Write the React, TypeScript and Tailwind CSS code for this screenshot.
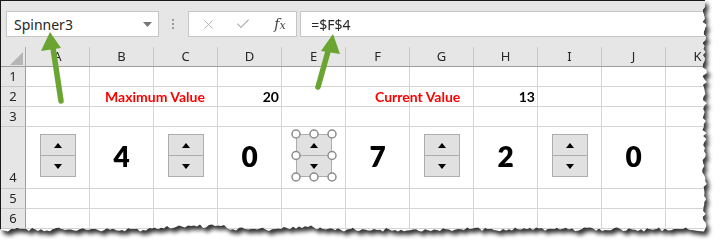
import { X, Check } from "lucide-react";

const cols = ["A", "B", "C", "D", "E", "F", "G", "H", "I", "J", "K"];

// jagged "torn paper" outline, deterministic
const tornPath = () => {
  let seed = 7;
  const rnd = () => {
    seed = (seed * 9301 + 49297) % 233280;
    return seed / 233280;
  };
  const pts: string[] = ["0px 0px", "705px 0px"];
  for (let y = 4; y < 228; y += 3) {
    pts.push(`${(702 + rnd() * 5).toFixed(1)}px ${y}px`);
  }
  for (let x = 704; x > 0; x -= 3) {
    const base = x > 160 && x < 230 ? 226 : x > 280 && x < 320 ? 227 : 229;
    pts.push(`${x}px ${(base + rnd() * 4 - 1.5).toFixed(1)}px`);
  }
  pts.push("0px 229px");
  return `polygon(${pts.join(",")})`;
};

const Tri = ({ up }: { up?: boolean }) => (
  <svg width="8" height="5" viewBox="0 0 8 5">
    <path d={up ? "M0 5 L4 0 L8 5 Z" : "M0 0 L8 0 L4 5 Z"} fill="#000" />
  </svg>
);

const Spinner = ({ selected }: { selected?: boolean }) => (
  <div className="relative">
    <div className="w-[36px] h-[43px] border border-[#adadad] bg-[#e1e1e1] flex flex-col">
      <div className="flex-1 flex items-center justify-center border-b border-[#adadad]">
        <Tri up />
      </div>
      <div className="flex-1 flex items-center justify-center">
        <Tri />
      </div>
    </div>
    {selected && (
      <svg
        className="absolute -left-[5px] -top-[5px]"
        width="46"
        height="53"
        viewBox="0 0 46 53"
      >
        {[
          [5, 5],
          [23, 5],
          [41, 5],
          [5, 26.5],
          [41, 26.5],
          [5, 48],
          [23, 48],
          [41, 48],
        ].map(([cx, cy], i) => (
          <circle
            key={i}
            cx={cx}
            cy={cy}
            r="4"
            fill="#fff"
            stroke="#8c8c8c"
            strokeWidth="1.5"
          />
        ))}
      </svg>
    )}
  </div>
);

const Big = ({ v }: { v: string }) => (
  <span className="font-['Lato'] font-extrabold text-[28px] text-black leading-none">
    {v}
  </span>
);

export default function App() {
  const row4: Record<string, JSX.Element> = {
    A: <Spinner />,
    B: <Big v="4" />,
    C: <Spinner />,
    D: <Big v="0" />,
    E: <Spinner selected />,
    F: <Big v="7" />,
    G: <Spinner />,
    H: <Big v="2" />,
    I: <Spinner />,
    J: <Big v="0" />,
  };

  const rows = [
    { n: "1", h: "h-[20px]" },
    { n: "2", h: "h-[20px]" },
    { n: "3", h: "h-[20px]" },
    { n: "4", h: "h-[62px]" },
    { n: "5", h: "h-[20px]" },
    { n: "6", h: "h-[20px]" },
  ];

  return (
    <div className="relative w-[726px] h-[250px] bg-white overflow-hidden font-['Open_Sans',sans-serif]">
      <div className="[filter:drop-shadow(3px_4px_2px_rgba(0,0,0,0.8))]">
        <div
          className="w-[716px] h-[240px] bg-white border-t border-l border-[#1a1a1a] overflow-hidden"
          style={{ clipPath: tornPath() }}
        >
          {/* formula bar */}
          <div className="h-[46px] bg-[#e6e6e6] flex items-start pt-[10px] pl-[5px]">
            <div className="w-[154px] h-[26px] bg-white border border-[#c6c6c6] flex items-center justify-between pl-[7px] pr-[6px]">
              <span className="text-[14px] text-[#262626] font-['Noto_Sans',sans-serif]">
                Spinner3
              </span>
              <svg width="9" height="5" viewBox="0 0 9 5">
                <path d="M0 0 L9 0 L4.5 5 Z" fill="#777" />
              </svg>
            </div>
            <div className="w-[30px] h-[26px] flex flex-col items-center justify-center gap-[2px]">
              <div className="w-[2px] h-[2px] bg-[#9a9a9a]" />
              <div className="w-[2px] h-[2px] bg-[#9a9a9a]" />
              <div className="w-[2px] h-[2px] bg-[#9a9a9a]" />
            </div>
            <div className="w-[110px] h-[26px] bg-white border border-[#c6c6c6] flex items-center pl-[12px]">
              <X size={15} strokeWidth={1.4} color="#adadad" />
              <Check size={16} strokeWidth={1.6} color="#adadad" className="ml-[19px]" />
              <span className="ml-[23px] font-['DejaVu_Serif',serif] italic text-[14px] text-[#444] leading-none">
                f<span className="text-[11px]">x</span>
              </span>
            </div>
            <div className="ml-[3px] w-[420px] h-[26px] bg-white border border-[#c6c6c6] flex items-center pl-[10px]">
              <span className="text-[14px] text-[#262626] font-['Noto_Sans',sans-serif]">
                =$F$4
              </span>
            </div>
          </div>

          {/* column headers */}
          <div className="flex h-[20px] bg-[#e6e6e6] border-b border-[#9e9e9e]">
            <div className="w-[25px] shrink-0 border-r border-[#ababab] flex items-end justify-end pr-[2px] pb-[1px]">
              <svg width="13" height="13" viewBox="0 0 13 13">
                <path d="M13 0 L13 13 L0 13 Z" fill="#b5b5b5" />
              </svg>
            </div>
            {cols.map((c) => (
              <div
                key={c}
                className="w-[64px] shrink-0 border-r border-[#c8c8c8] flex items-center justify-center text-[13px] text-[#262626] font-['Noto_Sans',sans-serif]"
              >
                {c}
              </div>
            ))}
          </div>

          {/* rows */}
          {rows.map((r) => (
            <div key={r.n} className={`flex ${r.h}`}>
              <div
                className={`w-[25px] shrink-0 bg-[#e6e6e6] border-r border-b border-r-[#9e9e9e] border-b-[#c8c8c8] flex justify-center text-[13px] text-[#262626] font-['Noto_Sans',sans-serif] ${
                  r.n === "4" ? "items-end pb-[1px]" : "items-center"
                }`}
              >
                {r.n}
              </div>
              {cols.map((c) => {
                let content: JSX.Element | null = null;
                let align = "items-center justify-center";
                if (r.n === "2") {
                  if (c === "B")
                    content = (
                      <span className="ml-[15px] whitespace-nowrap text-[14px] font-bold text-[#ff0000] font-['Lato',sans-serif]">
                        Maximum Value
                      </span>
                    );
                  if (c === "D")
                    content = (
                      <span className="text-[14px] font-bold font-['Lato',sans-serif]">20</span>
                    );
                  if (c === "F")
                    content = (
                      <span className="ml-[29px] whitespace-nowrap text-[14px] font-bold text-[#ff0000] font-['Lato',sans-serif]">
                        Current Value
                      </span>
                    );
                  if (c === "H")
                    content = (
                      <span className="text-[14px] font-bold font-['Lato',sans-serif]">13</span>
                    );
                  if (c === "B" || c === "F") align = "items-center justify-start";
                  if (c === "D" || c === "H") align = "items-center justify-end pr-[2px]";
                }
                if (r.n === "4" && row4[c]) {
                  content = row4[c];
                  align = "items-center justify-center pb-[4px]";
                }
                return (
                  <div
                    key={c}
                    className={`w-[64px] shrink-0 border-r border-b border-[#d4d4d4] flex ${align} ${
                      c === "B" || c === "F" ? "overflow-visible z-10" : ""
                    }`}
                  >
                    {content}
                  </div>
                );
              })}
            </div>
          ))}
        </div>
      </div>

      {/* green callout arrows */}
      <svg className="absolute left-0 top-0" width="726" height="250" viewBox="0 0 726 250">
        <g stroke="#6aa532" strokeWidth="5.5" strokeLinecap="round" fill="none">
          <line x1="61" y1="101" x2="53" y2="48" />
          <line x1="318" y1="87" x2="329" y2="48" />
        </g>
        <path d="M50 32 L41 51 L61 48 Z" fill="#6aa532" />
        <path d="M333 34 L321 51 L340 54 Z" fill="#6aa532" />
      </svg>
    </div>
  );
}
